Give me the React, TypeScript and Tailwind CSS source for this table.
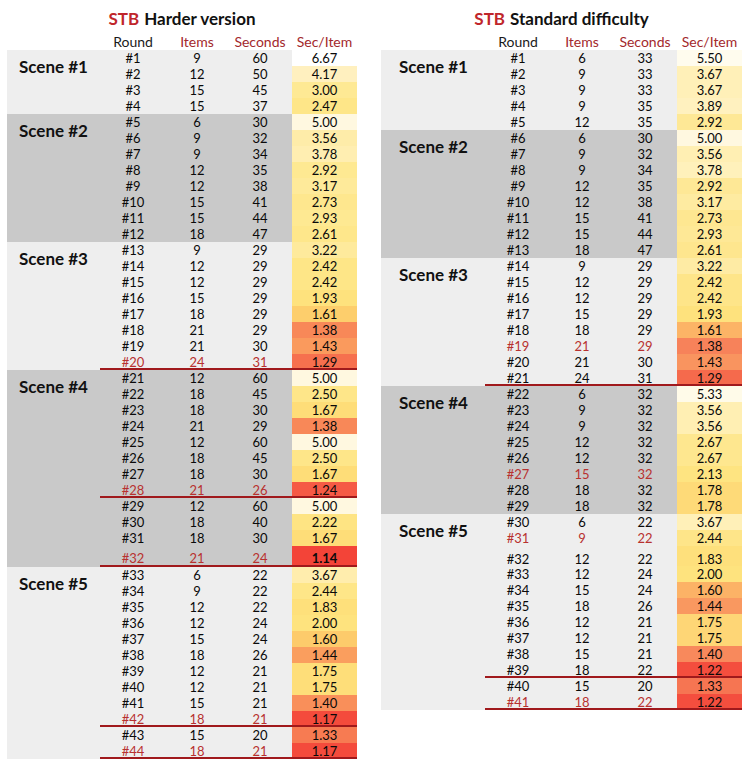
import React from 'react';

type Row = [string, number, number, string, string?];
type Scene = { name: string; dark: boolean; rows: Row[] };
type Stop = [number, string];

// flags: r = red text, l = red rule under the row, t = taller row, b = bold value
const harder: Scene[] = [
  {
    name: 'Scene #1',
    dark: false,
    rows: [
      ['#1', 9, 60, '6.67'],
      ['#2', 12, 50, '4.17'],
      ['#3', 15, 45, '3.00'],
      ['#4', 15, 37, '2.47'],
    ],
  },
  {
    name: 'Scene #2',
    dark: true,
    rows: [
      ['#5', 6, 30, '5.00'],
      ['#6', 9, 32, '3.56'],
      ['#7', 9, 34, '3.78'],
      ['#8', 12, 35, '2.92'],
      ['#9', 12, 38, '3.17'],
      ['#10', 15, 41, '2.73'],
      ['#11', 15, 44, '2.93'],
      ['#12', 18, 47, '2.61'],
    ],
  },
  {
    name: 'Scene #3',
    dark: false,
    rows: [
      ['#13', 9, 29, '3.22'],
      ['#14', 12, 29, '2.42'],
      ['#15', 12, 29, '2.42'],
      ['#16', 15, 29, '1.93'],
      ['#17', 18, 29, '1.61'],
      ['#18', 21, 29, '1.38'],
      ['#19', 21, 30, '1.43'],
      ['#20', 24, 31, '1.29', 'rl'],
    ],
  },
  {
    name: 'Scene #4',
    dark: true,
    rows: [
      ['#21', 12, 60, '5.00'],
      ['#22', 18, 45, '2.50'],
      ['#23', 18, 30, '1.67'],
      ['#24', 21, 29, '1.38'],
      ['#25', 12, 60, '5.00'],
      ['#26', 18, 45, '2.50'],
      ['#27', 18, 30, '1.67'],
      ['#28', 21, 26, '1.24', 'rl'],
      ['#29', 12, 60, '5.00'],
      ['#30', 18, 40, '2.22'],
      ['#31', 18, 30, '1.67'],
      ['#32', 21, 24, '1.14', 'rltb'],
    ],
  },
  {
    name: 'Scene #5',
    dark: false,
    rows: [
      ['#33', 6, 22, '3.67'],
      ['#34', 9, 22, '2.44'],
      ['#35', 12, 22, '1.83'],
      ['#36', 12, 24, '2.00'],
      ['#37', 15, 24, '1.60'],
      ['#38', 18, 26, '1.44'],
      ['#39', 12, 21, '1.75'],
      ['#40', 12, 21, '1.75'],
      ['#41', 15, 21, '1.40'],
      ['#42', 18, 21, '1.17', 'rl'],
      ['#43', 15, 20, '1.33'],
      ['#44', 18, 21, '1.17', 'rl'],
    ],
  },
];

const standard: Scene[] = [
  {
    name: 'Scene #1',
    dark: false,
    rows: [
      ['#1', 6, 33, '5.50'],
      ['#2', 9, 33, '3.67'],
      ['#3', 9, 33, '3.67'],
      ['#4', 9, 35, '3.89'],
      ['#5', 12, 35, '2.92'],
    ],
  },
  {
    name: 'Scene #2',
    dark: true,
    rows: [
      ['#6', 6, 30, '5.00'],
      ['#7', 9, 32, '3.56'],
      ['#8', 9, 34, '3.78'],
      ['#9', 12, 35, '2.92'],
      ['#10', 12, 38, '3.17'],
      ['#11', 15, 41, '2.73'],
      ['#12', 15, 44, '2.93'],
      ['#13', 18, 47, '2.61'],
    ],
  },
  {
    name: 'Scene #3',
    dark: false,
    rows: [
      ['#14', 9, 29, '3.22'],
      ['#15', 12, 29, '2.42'],
      ['#16', 12, 29, '2.42'],
      ['#17', 15, 29, '1.93'],
      ['#18', 18, 29, '1.61'],
      ['#19', 21, 29, '1.38', 'r'],
      ['#20', 21, 30, '1.43'],
      ['#21', 24, 31, '1.29', 'l'],
    ],
  },
  {
    name: 'Scene #4',
    dark: true,
    rows: [
      ['#22', 6, 32, '5.33'],
      ['#23', 9, 32, '3.56'],
      ['#24', 9, 32, '3.56'],
      ['#25', 12, 32, '2.67'],
      ['#26', 12, 32, '2.67'],
      ['#27', 15, 32, '2.13', 'r'],
      ['#28', 18, 32, '1.78'],
      ['#29', 18, 32, '1.78'],
    ],
  },
  {
    name: 'Scene #5',
    dark: false,
    rows: [
      ['#30', 6, 22, '3.67'],
      ['#31', 9, 22, '2.44', 'r'],
      ['#32', 12, 22, '1.83', 't'],
      ['#33', 12, 24, '2.00'],
      ['#34', 15, 24, '1.60'],
      ['#35', 18, 26, '1.44'],
      ['#36', 12, 21, '1.75'],
      ['#37', 12, 21, '1.75'],
      ['#38', 15, 21, '1.40'],
      ['#39', 18, 22, '1.22', 'l'],
      ['#40', 15, 20, '1.33'],
      ['#41', 18, 22, '1.22', 'rl'],
    ],
  },
];

const harderScale: Stop[] = [
  [1.14, '#f34438'],
  [1.24, '#f55a45'],
  [1.29, '#f6704e'],
  [1.38, '#f88858'],
  [1.44, '#fa9e5e'],
  [1.61, '#fdce6c'],
  [1.67, '#fedd78'],
  [2.0, '#fee37e'],
  [3.0, '#fee994'],
  [4.17, '#fff0bf'],
  [5.0, '#fff8e0'],
  [6.67, '#ffffff'],
];

const standardScale: Stop[] = [
  [1.22, '#f44e3e'],
  [1.29, '#f56a4c'],
  [1.38, '#f7825a'],
  [1.44, '#f99860'],
  [1.61, '#fcb466'],
  [1.75, '#fed676'],
  [1.83, '#fee07c'],
  [2.0, '#fee37e'],
  [2.92, '#fee896'],
  [3.67, '#fff0b8'],
  [5.0, '#fff8e0'],
  [5.5, '#fffcee'],
];

const hexToRgb = (hex: string) => [1, 3, 5].map((i) => parseInt(hex.slice(i, i + 2), 16));

const scaleColor = (value: number, stops: Stop[]) => {
  if (value <= stops[0][0]) return stops[0][1];
  for (let i = 1; i < stops.length; i++) {
    const [hi, hiColor] = stops[i];
    if (value <= hi) {
      const [lo, loColor] = stops[i - 1];
      const t = (value - lo) / (hi - lo);
      const a = hexToRgb(loColor);
      const b = hexToRgb(hiColor);
      const mixed = a.map((c, k) => Math.round(c + (b[k] - c) * t));
      return `rgb(${mixed.join(',')})`;
    }
  }
  return stops[stops.length - 1][1];
};

const DataRow: React.FC<{ row: Row; scale: Stop[] }> = ({ row, scale }) => {
  const [round, items, secs, value, flags = ''] = row;
  const red = flags.includes('r');
  const line = flags.includes('l');
  const tall = flags.includes('t');
  const bold = flags.includes('b');
  const textColor = red ? 'text-[#b8312f]' : 'text-[#0a0a0a]';
  // ruled rows keep their text on the same 16px pitch as the others
  const align = tall ? 'items-end' : line ? 'items-center pt-[2px]' : 'items-center';
  const height = tall ? (line ? 'h-[21px]' : 'h-[20px]') : 'h-4';

  return (
    <div className={`flex ${height} leading-[14px] ${line ? 'border-b-2 border-[#a0191c]' : ''}`}>
      <div className={`flex w-[66px] justify-center ${align} ${textColor}`}>{round}</div>
      <div className={`flex w-[62px] justify-center ${align} ${textColor}`}>{items}</div>
      <div className={`flex w-[64px] justify-center ${align} ${textColor}`}>{secs}</div>
      <div
        className={`flex w-[65px] justify-center ${align} text-[13px] text-[#0a0a0a] ${bold ? 'font-bold' : ''}`}
        style={{ backgroundColor: scaleColor(parseFloat(value), scale) }}
      >
        {value}
      </div>
    </div>
  );
};

const ScoreTable: React.FC<{
  title: string;
  scenes: Scene[];
  scale: Stop[];
  sceneWidth: string;
  labelPad: string;
}> = ({ title, scenes, scale, sceneWidth, labelPad }) => (
  <div className="flex flex-col">
    <div className="flex h-[34px] items-center justify-center pt-[4px] text-[17px] font-bold text-[#111111]">
      <span className="text-[#c0262b]">STB</span>
      <span className="ml-[5px]">{title}</span>
    </div>
    <div className="flex h-4 items-center text-[14px] leading-4">
      <div className={sceneWidth} />
      <div className="w-[66px] text-center text-[#1a1a1a]">Round</div>
      <div className="w-[62px] text-center text-[#a3282c]">Items</div>
      <div className="w-[64px] text-center text-[#a3282c]">Seconds</div>
      <div className="w-[65px] text-center text-[#a3282c]">Sec/Item</div>
    </div>
    {scenes.map((scene) => (
      <div
        key={scene.name}
        className={`flex text-[13px] ${scene.dark ? 'bg-[#c9c9c9]' : 'bg-[#eeeeee]'}`}
      >
        <div className={`${sceneWidth} ${labelPad} pt-[7px] text-[17px] font-bold leading-5 text-[#111111]`}>
          {scene.name}
        </div>
        <div className="flex flex-col">
          {scene.rows.map((row) => (
            <DataRow key={row[0]} row={row} scale={scale} />
          ))}
        </div>
      </div>
    ))}
  </div>
);

export default function App() {
  return (
    <div className="flex min-h-[768px] w-[751px] items-start gap-[24px] bg-white pl-[7px] font-['Lato',sans-serif]">
      <ScoreTable
        title="Harder version"
        scenes={harder}
        scale={harderScale}
        sceneWidth="w-[93px]"
        labelPad="pl-[12px]"
      />
      <ScoreTable
        title="Standard difficulty"
        scenes={standard}
        scale={standardScale}
        sceneWidth="w-[104px]"
        labelPad="pl-[18px]"
      />
    </div>
  );
}
